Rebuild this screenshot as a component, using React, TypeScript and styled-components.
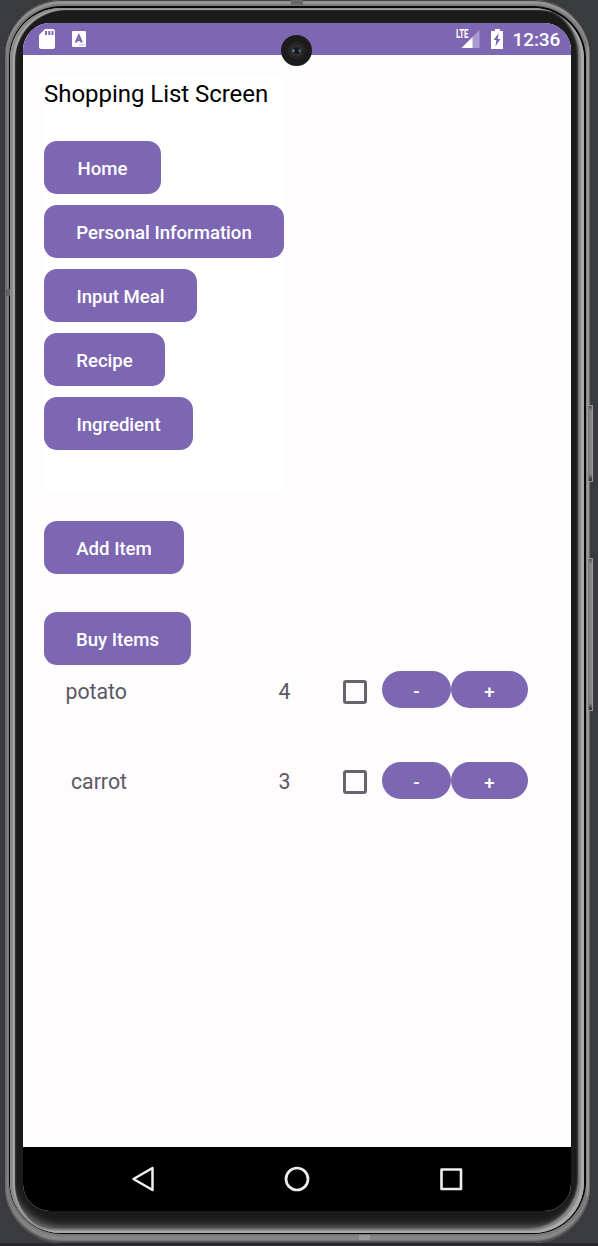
import React from 'react';
import styled, { createGlobalStyle } from 'styled-components';

const GlobalStyle = createGlobalStyle`
  * { box-sizing: border-box; }
  body { margin: 0; background: #3a3b3f; font-family: Roboto, sans-serif; }
  button { font: inherit; border: 0; }
`;

const Stage = styled.main`
  position: relative;
  width: 598px;
  height: 1246px;
  padding: 0 8px 3px 5px;
  overflow: hidden;
  background: linear-gradient(#3a3b3f 0 1243px, #29282e 1243px);
`;

const Rim = styled.div`
  position: relative;
  width: 585px;
  height: 1243px;
  padding: 6px 4px 9px;
  border-radius: 57px;
  background: linear-gradient(90deg, #4d4d4d 0, #858585 2px, #777 4px, #777 581px, #aaa 583px, #555 585px);
  box-shadow: inset 0 1px 1px #3c3c3c, inset 0 4px 2px #9b9b9b, inset 0 -2px 2px #454545, inset 0 -7px 2px #888;
`;

const Seam = styled.div`
  height: 100%;
  padding: 2px 2px 1px 1px;
  border-radius: 53px;
  background: #080808;
`;

const Bezel = styled.div`
  height: 100%;
  padding: 15px 13px 22px;
  border-radius: 51px;
  background: #1b1b1b;
  box-shadow: inset 3px 1px 1px #8c8c8c, inset -3px -2px 1px #aaa, inset 5px 2px 1px #aaa,
    inset -6px -4px 2px #8a8a8a, inset 0 -6px 8px #777;
`;

const Screen = styled.div`
  display: flex;
  flex-direction: column;
  width: 548px;
  height: 1188px;
  border-radius: 27px;
  overflow: hidden;
  background: #fffcfe;
`;

const StatusBar = styled.header`
  display: flex;
  align-items: center;
  height: 32px;
  padding: 0 11px 0 15px;
  background: #7d67b3;
  color: #fff;
`;

const StatusGroup = styled.div<{ $end?: boolean }>`
  display: flex;
  align-items: center;
  margin-left: ${({ $end }) => ($end ? 'auto' : '0')};
  svg { display: block; }
`;

const LanguageIcon = styled.svg`
  margin-left: 16px;
`;

const Signal = styled.div`
  display: grid;
  width: 24px;
  height: 20px;
  > * { grid-area: 1 / 1; }
`;

const NetworkLabel = styled.span`
  width: 20px;
  margin-top: -2px;
  font-size: 12px;
  font-weight: 700;
  line-height: 14px;
  letter-spacing: -0.3px;
  transform: scaleX(0.66);
  transform-origin: left;
`;

const BatteryIcon = styled.svg`
  margin-left: 11px;
`;

const Clock = styled.time`
  width: 47.5px;
  margin-left: 9.5px;
  padding-top: 1px;
  font-size: 19px;
  font-weight: 500;
  line-height: 24px;
  letter-spacing: -0.1px;
  white-space: nowrap;
`;

const Camera = styled.div`
  position: absolute;
  top: 35px;
  left: 281px;
  width: 31px;
  height: 31px;
`;

const Content = styled.section`
  flex: 1;
  padding: 21px;
`;

const Menu = styled.nav`
  display: flex;
  flex-direction: column;
  align-items: flex-start;
  gap: 11px;
  width: 240px;
  height: 415px;
  background: #fff;
`;

const Title = styled.h1`
  height: 54px;
  margin: 0;
  padding-top: 3px;
  color: #000;
  font-size: 24px;
  font-weight: 400;
  letter-spacing: -0.04px;
  line-height: 30px;
  white-space: nowrap;
`;

const ActionButton = styled.button<{ $width: number; $top?: number }>`
  display: flex;
  align-items: center;
  justify-content: center;
  flex: none;
  width: ${({ $width }) => $width}px;
  height: 53px;
  margin-top: ${({ $top = 0 }) => $top}px;
  padding: 2px 0 0;
  border-radius: 13px;
  background: #7d67b3;
  color: #fff;
  font-size: 18.6px;
  font-weight: 500;
  white-space: nowrap;
`;

const ItemList = styled.ul`
  display: flex;
  flex-direction: column;
  gap: 53px;
  margin: 6px 0 0;
  padding: 0;
  list-style: none;
`;

const Item = styled.li`
  display: grid;
  grid-template-columns: 83px 163.5px 52.5px 39px 69px 77px;
  align-items: center;
  height: 37.4px;
  color: #5b5865;
  font-size: 21.3px;
`;

const ItemText = styled.span`
  padding-top: 4.6px;
  text-align: right;
  line-height: 28px;
`;

const Checkbox = styled.span`
  width: 24px;
  height: 24px;
  margin: 4px 0 0 52.5px;
  border: 3px solid #67636f;
  border-radius: 3px;
`;

const StepButton = styled.button`
  height: 37px;
  padding: 5px 0 0;
  border-radius: 19px;
  background: #7d67b3;
  color: #fff;
  font-size: 18.6px;
  font-weight: 500;
`;

const NavBar = styled.footer`
  display: flex;
  align-items: center;
  justify-content: center;
  gap: 128px;
  height: 64px;
  background: #000;
`;

const SideKey = styled.div<{ $top: number; $height: number }>`
  position: absolute;
  top: ${({ $top }) => $top}px;
  left: 588px;
  width: 5px;
  height: ${({ $height }) => $height}px;
  border: 1px solid #999;
  border-left-color: #777;
  border-radius: 1px;
  background: linear-gradient(#555 0, #858585 5px, #858585 calc(100% - 7px), #292929);
`;

const AntennaBand = styled.div<{ $x: number; $y: number; $w: number; $h: number; $color: string }>`
  position: absolute;
  left: ${({ $x }) => $x}px;
  top: ${({ $y }) => $y}px;
  width: ${({ $w }) => $w}px;
  height: ${({ $h }) => $h}px;
  background: ${({ $color }) => $color};
`;

const buttons = [
  { label: 'Home', width: 117 },
  { label: 'Personal Information', width: 240 },
  { label: 'Input Meal', width: 153 },
  { label: 'Recipe', width: 121 },
  { label: 'Ingredient', width: 149 },
];

const items = [
  { name: 'potato', count: 4 },
  { name: 'carrot', count: 3 },
];

export default function App() {
  return (
    <Stage>
      <GlobalStyle />
      <Rim>
        <Seam>
          <Bezel>
            <Screen>
              <StatusBar>
                <StatusGroup>
                  <svg width="18" height="20" viewBox="0 0 18 20">
                    <path fill="#fff" fillRule="evenodd" d="M7 0h7.5Q17 0 17 2.5V17.5Q17 20 14.5 20H3.5Q1 20 1 17.5V6zM7 2v4h2V2zM10.3 2v4h2V2zM13.5 2v4h2V2z" />
                  </svg>
                  <LanguageIcon width="14" height="16" viewBox="0 0 14 16">
                    <rect width="14" height="16" rx="1.2" fill="#fff" />
                    <path d="M3.7 11.5 6.8 4.5l3.1 7M5 9.3h3.8" fill="none" stroke="#7d67b3" strokeWidth="2.1" />
                    <path d="M7.3 14h1.3m.8 0h1.3m.8 0h1.3" stroke="#9f91c8" strokeWidth="1.2" />
                  </LanguageIcon>
                </StatusGroup>
                <StatusGroup $end>
                  <Signal>
                    <svg width="24" height="20" viewBox="0 0 24 20">
                      <path d="M23.5 1v18h-18z" fill="#a99bcf" />
                      <path d="M16.5 8v11h-11z" fill="#fff" />
                    </svg>
                    <NetworkLabel>LTE</NetworkLabel>
                  </Signal>
                  <BatteryIcon width="12" height="20" viewBox="0 0 12 20">
                    <path d="M4 0h5v2h3v18H0V2h4z" fill="#fff" />
                    <path d="M7.6 4 2.6 11h2.7l-.9 6.5 5-7.5H6.8z" fill="#7d67b3" />
                  </BatteryIcon>
                  <Clock>12:36</Clock>
                </StatusGroup>
              </StatusBar>
              <Content>
                <Menu>
                  <Title>Shopping List Screen</Title>
                  {buttons.map((b) => (
                    <ActionButton key={b.label} $width={b.width}>{b.label}</ActionButton>
                  ))}
                </Menu>
                <ActionButton $width={140} $top={30}>Add Item</ActionButton>
                <ActionButton $width={147} $top={38}>Buy Items</ActionButton>
                <ItemList>
                  {items.map((item) => (
                    <Item key={item.name}>
                      <ItemText>{item.name}</ItemText>
                      <ItemText>{item.count}</ItemText>
                      <Checkbox />
                      <span />
                      <StepButton>-</StepButton>
                      <StepButton>+</StepButton>
                    </Item>
                  ))}
                </ItemList>
              </Content>
              <NavBar>
                <svg width="26" height="26" viewBox="0 0 26 26">
                  <path d="M22.5 2v22L3.5 13z" fill="none" stroke="#eee" strokeWidth="2.5" strokeLinejoin="round" />
                </svg>
                <svg width="26" height="26" viewBox="0 0 26 26">
                  <circle cx="13" cy="13" r="11" fill="none" stroke="#eee" strokeWidth="2.7" />
                </svg>
                <svg width="26" height="26" viewBox="0 0 26 26">
                  <rect x="3.5" y="3.5" width="19.5" height="19.5" fill="none" stroke="#eee" strokeWidth="2.6" strokeLinejoin="round" />
                </svg>
              </NavBar>
            </Screen>
          </Bezel>
        </Seam>
      </Rim>
      <AntennaBand $x={291} $y={0} $w={12} $h={5} $color="#6a6a6a" />
      <AntennaBand $x={359} $y={1235} $w={11} $h={5} $color="#9a9a9a" />
      <AntennaBand $x={6} $y={289} $w={4} $h={7} $color="#606060" />
      <Camera>
        <svg width="31" height="31" viewBox="0 0 31 31">
          <circle cx="15.5" cy="15.5" r="15.5" fill="#1c1c1c" />
          <circle cx="15.5" cy="15.5" r="9" fill="#252525" />
          <circle cx="15.5" cy="15.5" r="6" fill="#303033" />
          <circle cx="15.5" cy="15.5" r="3.5" fill="#17191d" />
          <ellipse cx="12.4" cy="15.8" rx="1.2" ry="1.8" fill="#57869a" />
          <ellipse cx="18.7" cy="15.8" rx="1.2" ry="1.8" fill="#4864a0" />
        </svg>
      </Camera>
      <SideKey $top={405} $height={77} />
      <SideKey $top={558} $height={153} />
    </Stage>
  );
}
